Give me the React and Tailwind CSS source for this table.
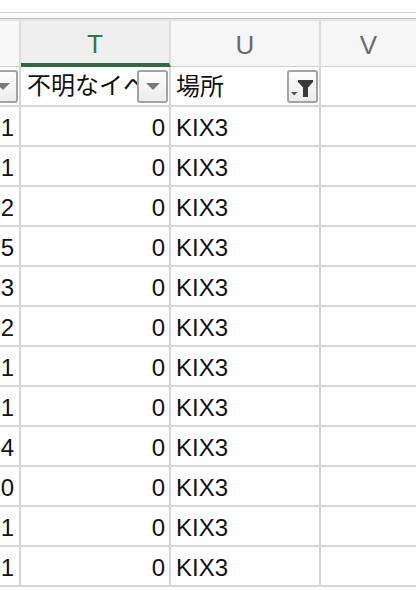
import React from "react";

const leftVals = ["1", "1", "2", "5", "3", "2", "1", "1", "4", "0", "1", "1"];

function DropBtn({ className = "" }) {
  return (
    <div
      className={
        "absolute top-[3px] h-[33px] w-[31px] rounded-[3px] border-2 border-[#a3a3a3] bg-gradient-to-b from-[#fdfdfd] to-[#ececec] flex items-center justify-center " +
        className
      }
    >
      <svg width="16" height="9" viewBox="0 0 16 9">
        <polygon points="1,1 15,1 8,8" fill="#7a7a7a" />
      </svg>
    </div>
  );
}

function FilterBtn() {
  return (
    <div className="absolute top-[3px] right-[1px] h-[33px] w-[31px] rounded-[3px] border-2 border-[#a3a3a3] bg-gradient-to-b from-[#fdfdfd] to-[#ececec]">
      <svg width="27" height="29" viewBox="0 0 27 29" className="block">
        <polygon points="2,20 8.5,20 5.25,23.5" fill="#555" />
        <polygon points="9,8 24,8 24,10 19,15.5 19,25 14,25 14,15.5 9,10" fill="#3a3a3a" />
      </svg>
    </div>
  );
}

export default function App() {
  const font = { fontFamily: '"Liberation Sans", "Noto Sans CJK JP", Arial, sans-serif' };
  return (
    <div
      className="w-[416px] h-[590px] overflow-hidden bg-white text-[#111]"
      style={font}
    >
      {/* top strip */}
      <div className="h-[12px] bg-white" />
      <div className="h-[1px] bg-[#d2d2d2]" />
      <div className="h-[5px] bg-[#fafafa]" />
      <div className="h-[1px] bg-[#bdbdbd]" />
      <div className="h-[2px] bg-[#e3e3e3]" />

      {/* column header */}
      <div className="flex h-[46px]">
        <div className="w-[21px] shrink-0 bg-[#f8f8f8] border-r-2 border-[#dcdcdc] border-b border-b-[#d0d0d0]" />
        <div className="w-[150px] shrink-0 bg-[#efefef] border-r-2 border-[#dcdcdc] border-b-4 border-b-[#2e6b42] flex items-center justify-center pt-[3px]">
          <span className="text-[26px] leading-none text-[#2f7a48]">T</span>
        </div>
        <div className="w-[150px] shrink-0 bg-[#f6f6f6] border-r-2 border-[#dcdcdc] border-b border-b-[#d0d0d0] flex items-center justify-center pt-[3px]">
          <span className="text-[26px] leading-none text-[#6a6a6a]">U</span>
        </div>
        <div className="flex-1 bg-[#f6f6f6] border-b border-b-[#d0d0d0] flex items-center justify-center pt-[3px]">
          <span className="text-[26px] leading-none text-[#6a6a6a]">V</span>
        </div>
      </div>

      {/* filter row */}
      <div className="flex h-[40px]">
        <div className="relative w-[21px] shrink-0 overflow-hidden border-r-2 border-b-2 border-[#d6d6d6]">
          <DropBtn className="right-[1px]" />
        </div>
        <div className="relative w-[150px] shrink-0 border-r-2 border-b-2 border-[#d6d6d6] flex items-center pl-[6px] pt-[2px]">
          <div className="w-[110px] overflow-hidden">
            <span className="text-[24px] whitespace-nowrap leading-none">不明なイベ</span>
          </div>
          <DropBtn className="right-[1px]" />
        </div>
        <div className="relative w-[150px] shrink-0 border-r-2 border-b-2 border-[#d6d6d6] flex items-center pl-[5px] pt-[2px]">
          <span className="text-[24px] whitespace-nowrap leading-none">場所</span>
          <FilterBtn />
        </div>
        <div className="flex-1 border-b-2 border-[#d6d6d6]" />
      </div>

      {/* data rows */}
      {leftVals.map((v, i) => (
        <div key={i} className="flex h-[40px]">
          <div className="w-[21px] shrink-0 border-r-2 border-b-2 border-[#d6d6d6] flex items-center justify-end pr-[5px] pt-[3px]">
            <span className="text-[24px] leading-none">{v}</span>
          </div>
          <div className="w-[150px] shrink-0 border-r-2 border-b-2 border-[#d6d6d6] flex items-center justify-end pr-[4px] pt-[3px]">
            <span className="text-[24px] leading-none">0</span>
          </div>
          <div className="w-[150px] shrink-0 border-r-2 border-b-2 border-[#d6d6d6] flex items-center pl-[5px] pt-[3px]">
            <span className="text-[24px] leading-none">KIX3</span>
          </div>
          <div className="flex-1 border-b-2 border-[#d6d6d6]" />
        </div>
      ))}
    </div>
  );
}
